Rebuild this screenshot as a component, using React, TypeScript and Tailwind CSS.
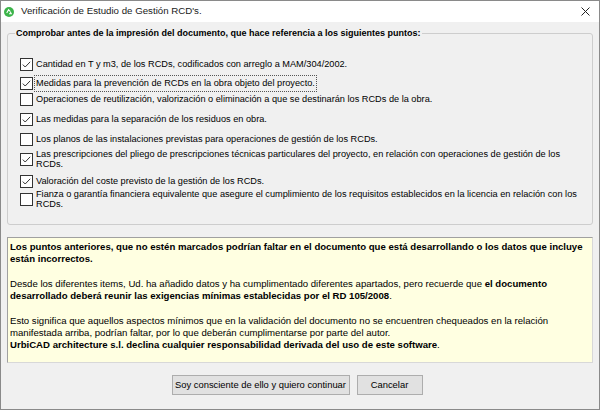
import React from "react";

interface CheckItem {
  lines: string[];
  checked: boolean;
  focused?: boolean;
  mt: string;
}

// margins reproduce the uneven WinForms spacing of the original dialog
const items: CheckItem[] = [
  { lines: ["Cantidad en T y m3, de los RCDs, codificados con arreglo a MAM/304/2002."], checked: true, mt: "mt-[20px]" },
  { lines: ["Medidas para la prevención de RCDs en la obra objeto del proyecto."], checked: true, focused: true, mt: "mt-[6px]" },
  { lines: ["Operaciones de reutilización, valorización o eliminación a que se destinarán los RCDs de la obra."], checked: false, mt: "mt-[3px]" },
  { lines: ["Las medidas para la separación de los residuos en obra."], checked: true, mt: "mt-[7px]" },
  { lines: ["Los planos de las instalaciones previstas para operaciones de gestión de los RCDs."], checked: false, mt: "mt-[7px]" },
  {
    lines: [
      "Las prescripciones del pliego de prescripciones técnicas particulares del proyecto, en relación con operaciones de gestión de los",
      "RCDs.",
    ],
    checked: true,
    mt: "mt-[3px]",
  },
  { lines: ["Valoración del coste previsto de la gestión de los RCDs."], checked: true, mt: "mt-[6px]" },
  {
    lines: [
      "Fianza o garantía financiera equivalente que asegure el cumplimiento de los requisitos establecidos en la licencia en relación con los",
      "RCDs.",
    ],
    checked: false,
    mt: "mt-[1px]",
  },
];

function CheckBox({ checked }: { checked: boolean }) {
  return (
    <svg width="13" height="13" viewBox="0 0 13 13" className="shrink-0">
      <rect x="0.5" y="0.5" width="12" height="12" fill="#ffffff" stroke="#333333" />
      {checked && (
        <polyline points="2.8,6.6 5.2,9 10.2,3.8" fill="none" stroke="#333333" strokeWidth="1" />
      )}
    </svg>
  );
}

function CheckRow({ item }: { item: CheckItem }) {
  const multi = item.lines.length > 1;
  return (
    <div className={`flex items-center ${item.mt} ${multi ? "h-[20px]" : "h-[13px]"}`}>
      <CheckBox checked={item.checked} />
      <span
        className={`ml-[3px] whitespace-nowrap ${multi ? "leading-[10px]" : "leading-[13px]"} ${
          item.focused ? "outline outline-1 outline-dotted outline-[#555] outline-offset-[1px]" : ""
        }`}
      >
        {item.lines.map((l, i) => (
          <React.Fragment key={i}>
            {i > 0 && <br />}
            {l}
          </React.Fragment>
        ))}
      </span>
    </div>
  );
}

export default function App() {
  return (
    <div className="w-[600px] h-[410px] bg-[#f0f0f0] border border-[#8a8a8a] flex flex-col font-['Liberation_Sans',Arial,sans-serif] text-[9.2px] text-black overflow-hidden">
      {/* title bar */}
      <div className="h-[21px] bg-white flex items-center shrink-0">
        <svg width="10" height="10" viewBox="0 0 11 11" className="ml-[3px] mt-[1px]">
          <circle cx="5.5" cy="5.5" r="5.5" fill="#3cb44a" />
          <path d="M3 6.5 L5 3 L7 5 M5.5 7.5 L8 7.5 L7 5.5" fill="none" stroke="#ffffff" strokeWidth="1.2" />
        </svg>
        <span className="ml-[7px] text-[9.7px] text-[#1a1a1a]">Verificación de Estudio de Gestión RCD's.</span>
        <svg width="9" height="9" viewBox="0 0 9 9" className="ml-auto mr-[9px]">
          <path d="M0.5 0.5 L8.5 8.5 M8.5 0.5 L0.5 8.5" stroke="#222" strokeWidth="1" />
        </svg>
      </div>

      <div className="flex flex-col px-[6px]">
        <fieldset className="mt-[5px] h-[198px] border border-[#cdcdcd] rounded-[3px] pl-[12px] pr-[6px] min-w-0">
          <legend className="font-bold text-[9px] px-[1px] ml-[-5px] leading-[13px]">
            Comprobar antes de la impresión del documento, que hace referencia a los siguientes puntos:
          </legend>
          <div className="flex flex-col -mt-[2px]">
            {items.map((it, i) => (
              <CheckRow key={i} item={it} />
            ))}
          </div>
        </fieldset>

        <div className="mt-[12px] h-[126px] bg-[#ffffe1] border border-[#a0a0a0] border-b-[#d8d8d8] border-r-[#d8d8d8] pl-[2px] pt-[3px] text-[9.6px] leading-[12px] whitespace-nowrap">
          <p className="font-bold">
            Los puntos anteriores, que no estén marcados podrían faltar en el documento que está desarrollando o los datos que incluye
            <br />
            están incorrectos.
          </p>
          <p className="mt-[13px]">
            Desde los diferentes items, Ud. ha añadido datos y ha cumplimentado diferentes apartados, pero recuerde que{" "}
            <b>el documento</b>
            <br />
            <b>desarrollado deberá reunir las exigencias mínimas establecidas por el RD 105/2008</b>.
          </p>
          <p className="mt-[13px]">
            Esto significa que aquellos aspectos mínimos que en la validación del documento no se encuentren chequeados en la relación
            <br />
            manifestada arriba, podrían faltar, por lo que deberán cumplimentarse por parte del autor.
            <br />
            <b>UrbiCAD architecture s.l. declina cualquier responsabilidad derivada del uso de este software</b>.
          </p>
        </div>

        <div className="mt-[12px] flex justify-center gap-[7px] pr-[6px]">
          <button className="w-[178px] h-[20px] bg-[#e1e1e1] border border-[#adadad] text-[9.4px]">
            Soy consciente de ello y quiero continuar
          </button>
          <button className="w-[66px] h-[20px] bg-[#e1e1e1] border border-[#adadad] text-[9.4px]">Cancelar</button>
        </div>
      </div>
    </div>
  );
}
